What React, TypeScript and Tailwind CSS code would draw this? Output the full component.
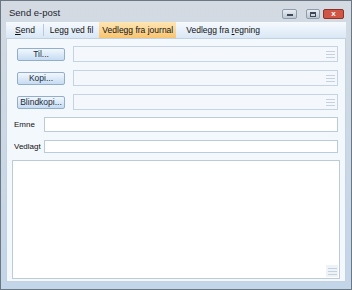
import React from 'react';

function Grip() {
  return (
    <div className="flex h-[10px] w-[9px] flex-col justify-center gap-[2px]">
      <div className="h-px w-full bg-[#c4d2e0]" />
      <div className="h-px w-full bg-[#c4d2e0]" />
      <div className="h-px w-full bg-[#c4d2e0]" />
    </div>
  );
}

function AddrRow({ label }: { label: string }) {
  return (
    <div className="flex h-[16px] items-center">
      <div className="flex w-[66px] pl-[10px]">
        <button className="h-[13px] w-[48px] rounded-[2px] border border-[#93aecd] bg-gradient-to-b from-[#f1f7fd] to-[#c6dcf2] text-[8.5px] leading-[11px] text-[#1a2a3a]">
          {label}
        </button>
      </div>
      <div className="flex h-[16px] flex-1 items-center justify-end border border-[#c6d4e2] bg-[#f4f8fc] pr-[2px]">
        <Grip />
      </div>
    </div>
  );
}

export default function App() {
  return (
    <div
      className="flex h-[290px] w-[352px] flex-col border border-[#6c7784] bg-gradient-to-b from-[#d3dae2] to-[#c3d5e8] text-[#111]"
      style={{ fontFamily: '"Liberation Sans", Arial, sans-serif' }}
    >
      {/* title bar */}
      <div className="flex h-[21px] items-start justify-between pl-[8px] pr-[7px]">
        <span className="mt-[7px] text-[9.5px] leading-none text-[#1d2530]">Send e-post</span>
        <div className="mt-[8px] flex items-center">
          <div className="flex h-[10px] w-[15px] items-end justify-center rounded-[2px] border border-[#8f9bab] bg-gradient-to-b from-[#e8edf2] to-[#bcc7d3] pb-[2px]">
            <div className="h-[2px] w-[6px] bg-[#3e4856]" />
          </div>
          <div className="ml-[9px] flex h-[10px] w-[14px] items-center justify-center rounded-[2px] border border-[#8f9bab] bg-gradient-to-b from-[#e8edf2] to-[#bcc7d3]">
            <div className="h-[5px] w-[6px] border border-t-2 border-[#3e4856]" />
          </div>
          <div className="ml-[3px] flex h-[10px] w-[21px] items-center justify-center rounded-[2px] border border-[#8a3328] bg-[#d05545] text-[8px] font-bold leading-none text-white">
            x
          </div>
        </div>
      </div>

      {/* frame */}
      <div className="flex flex-1 flex-col px-[5px] pb-[7px]">
        {/* menu bar */}
        <div className="flex h-[16px] items-center bg-gradient-to-b from-[#f6fafe] to-[#d9e7f5] text-[8.5px] leading-none">
          <span className="pl-[9px] pr-[8px]">
            <u>S</u>end
          </span>
          <div className="h-[12px] w-px bg-[#b9c9da]" />
          <span className="pl-[6px] pr-[6px]">Legg ved fil</span>
          <span className="flex h-full items-center bg-gradient-to-b from-[#fde6b4] to-[#f8c470] px-[3px]">
            Vedlegg fra journal
          </span>
          <span className="pl-[10px]">
            Vedlegg fra <u>r</u>egning
          </span>
        </div>

        {/* content */}
        <div className="flex flex-1 flex-col border border-[#c2d2e3] bg-[#f3f8fc] pt-[7px] pb-[2px]">
          <div className="flex flex-col gap-[8px] pr-[7px]">
            <AddrRow label="Til..." />
            <AddrRow label="Kopi..." />
            <AddrRow label="Blindkopi..." />
          </div>
          <div className="mt-[7px] flex flex-col gap-[8px] pr-[7px] text-[8px] leading-none">
            <div className="flex items-center">
              <span className="w-[37px] pl-[7px]">Emne</span>
              <div className="h-[15px] flex-1 border border-[#bccbd8] bg-white" />
            </div>
            <div className="flex items-center">
              <span className="w-[37px] pl-[7px]">Vedlagt</span>
              <div className="h-[13px] flex-1 border border-[#bccbd8] bg-white" />
            </div>
          </div>
          <div className="ml-[5px] mr-[5px] mt-[7px] flex flex-1 items-end justify-end border border-[#bccbd8] bg-white p-[1px]">
            <div className="flex h-[12px] w-[12px] items-center justify-center bg-[#eef3f8]">
              <Grip />
            </div>
          </div>
        </div>
      </div>
    </div>
  );
}
